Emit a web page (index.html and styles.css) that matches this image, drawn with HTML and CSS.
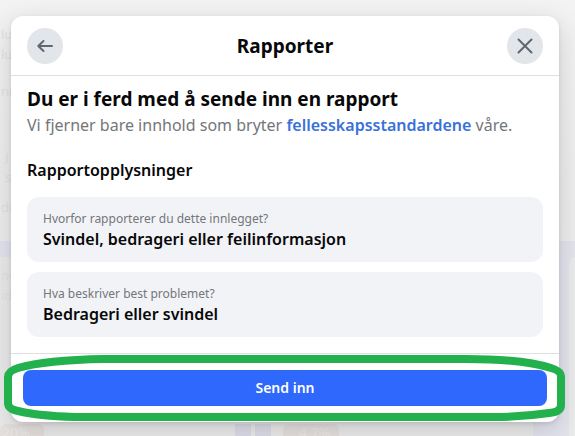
FILE: index.html
```html
<!DOCTYPE html>
<html lang="nb">
<head>
<meta charset="utf-8">
<meta name="viewport" content="width=device-width, initial-scale=1">
<title>Rapporter</title>
<link rel="stylesheet" href="styles.css">
</head>
<body>
<div class="backdrop" aria-hidden="true">
  <div class="band"><div class="band-card"></div><div class="band-card next"></div></div>
  <div class="feed">
    <span>lu</span><span>luf</span><span class="wide">nr</span><span class="wide deep">J</span><span class="deep">s</span><span class="gap">de</span><span class="wide gap">ne</span><span>id</span>
  </div>
  <div class="prices"><span class="badge">20%</span><span class="bar"></span><span class="bar"></span><span class="badge">4.7%</span></div>
</div>
<main class="dialog" role="dialog" aria-labelledby="dialog-title">
  <header class="header">
    <button class="round" type="button" aria-label="Tilbake">
      <svg width="20" height="20" viewBox="0 0 20 20"><path d="M17 10H3.500M8.500 5L3.300 10l5.200 5"/></svg>
    </button>
    <h1 class="title" id="dialog-title">Rapporter</h1>
    <button class="round" type="button" aria-label="Lukk">
      <svg width="20" height="20" viewBox="0 0 20 20"><path d="M3.500 3.500l13 13M16.500 3.500l-13 13"/></svg>
    </button>
  </header>
  <section class="content">
    <h2 class="heading">Du er i ferd med å sende inn en rapport</h2>
    <p class="intro">Vi fjerner bare innhold som bryter <a href="#">fellesskapsstandardene</a> våre.</p>
    <h3 class="subheading">Rapportopplysninger</h3>
    <dl class="answers">
      <div class="answer">
        <dt>Hvorfor rapporterer du dette innlegget?</dt>
        <dd>Svindel, bedrageri eller feilinformasjon</dd>
      </div>
      <div class="answer">
        <dt>Hva beskriver best problemet?</dt>
        <dd>Bedrageri eller svindel</dd>
      </div>
    </dl>
  </section>
  <footer class="footer">
    <button class="submit" type="button">Send inn</button>
    <svg class="ring" viewBox="0 0 561 66" preserveAspectRatio="none" aria-hidden="true"><path d="M4 22Q4 16 14 13Q42 5 100 4H462Q520 4 547 13Q557 16 557 21V50Q557 57 545 58Q518 62 490 62H70Q35 61 14 56Q4 54 4 48Z"/></svg>
  </footer>
</main>
</body>
</html>
```
FILE: styles.css
```css
* { box-sizing: border-box; }

body {
  margin: 0;
  min-height: 100vh;
  padding: 16px 16px 14px 11px;
  background: #f0f0f0;
  color: #080809;
  font-family: "Segoe UI", "Noto Sans", "Open Sans", sans-serif;
}

h1, h2, h3, p, dl, dd { margin: 0; }
button { border: 0; padding: 0; font-family: inherit; cursor: pointer; }

.backdrop {
  position: absolute;
  inset: 0;
  overflow: hidden;
  background: linear-gradient(#f3f3f3, #eeeeee 40%, #ebebeb);
  color: #e3e3e3;
}
.band {
  position: absolute;
  inset: 241px 0 0 0;
  display: flex;
  gap: 36px;
  padding-top: 16px;
  background: #e3e4ee;
}
.band-card {
  flex: 1;
  background: #ebebeb;
}
.band-card.next {
  flex: 0 0 6px;
  border-top-left-radius: 6px;
}
.feed {
  position: absolute;
  top: 24px;
  left: 0;
  display: flex;
  flex-direction: column;
  padding-left: 1px;
  font-size: 13px;
  line-height: 20px;
}
.feed .wide { margin-top: 17px; }
.feed .deep { padding-left: 4px; }
.feed .gap { margin-top: 10px; }
.feed .wide.gap { margin-top: 48px; }
.feed .wide.deep { margin-top: 46px; }
.prices {
  position: absolute;
  inset: auto 0 0 0;
  height: 12px;
  display: flex;
  gap: 4px;
  font-size: 14px;
  line-height: 18px;
}
.badge {
  width: 56px;
  padding-left: 16px;
  border-radius: 6px 6px 0 0;
  background: #e6e1df;
  color: #edeae8;
}
.badge:first-child { width: 44px; padding-left: 2px; margin-right: 187px; }
.bar { width: 16px; background: #dedeea; }
.bar + .badge { margin-left: 8px; }

.dialog {
  position: relative;
  background: #fff;
  border-radius: 12px;
  box-shadow: 0 8px 28px rgba(0, 0, 0, .16), 0 2px 4px rgba(0, 0, 0, .1);
}

.header {
  display: flex;
  align-items: center;
  justify-content: space-between;
  height: 60px;
  padding: 0 16px;
  border-bottom: 1px solid #dedfe1;
}
.title { font-size: 19px; line-height: 24px; font-weight: 700; }
.round {
  display: flex;
  align-items: center;
  justify-content: center;
  width: 36px;
  height: 36px;
  border-radius: 50%;
  background: #e2e5e9;
}
.round path {
  fill: none;
  stroke: #606770;
  stroke-width: 2;
  stroke-linecap: round;
  stroke-linejoin: round;
}

.content { padding: 11px 16px 16px; }
.heading { font-size: 19px; line-height: 24px; font-weight: 700; }
.intro { margin-top: 4px; font-size: 16px; line-height: 20px; color: #73767a; }
.intro a { color: #3a71d9; font-weight: 600; text-decoration: none; }
.subheading { margin-top: 25px; font-size: 16px; line-height: 20px; font-weight: 600; }
.answers { display: grid; gap: 10px; margin-top: 17px; }
.answer {
  padding: 12px 16px 13px;
  border-radius: 12px;
  background: #f2f3f7;
}
.answer dt { font-size: 12px; line-height: 20px; color: #73767a; }
.answer dd { font-size: 16px; line-height: 20px; font-weight: 600; }

.footer {
  position: relative;
  padding: 16px 12px;
  border-top: 1px solid #dedfe1;
}
.submit {
  display: block;
  width: 100%;
  height: 36px;
  border-radius: 8px;
  background: #2e68fd;
  color: #fff;
  font-size: 14px;
  line-height: 20px;
  font-weight: 600;
}
.ring {
  position: absolute;
  top: 1px;
  left: -7px;
  width: calc(100% + 13px);
  height: calc(100% - 2px);
  overflow: visible;
  pointer-events: none;
}
.ring path { fill: none; stroke: #23b14d; stroke-width: 8; }
```
